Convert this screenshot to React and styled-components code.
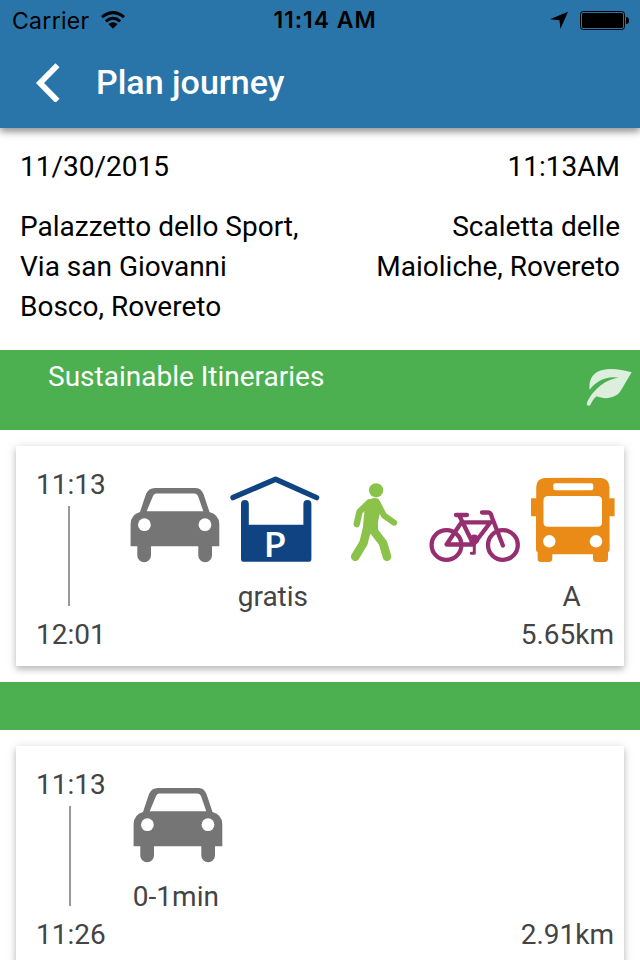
import React from "react";
import styled, { createGlobalStyle } from "styled-components";

const GlobalStyle = createGlobalStyle`
  * { box-sizing: border-box; }
  body { margin: 0; background: #fff; }
`;

const Screen = styled.main`
  width: 640px;
  height: 960px;
  overflow: hidden;
  background: #fff;
  color: #000;
  font: 400 28px/40px Roboto, sans-serif;
`;

const Header = styled.header`
  height: 128px;
  background: #2975a9;
  box-shadow: 0 2px 10px rgba(0, 0, 0, 0.26), 0 4px 6px rgba(0, 0, 0, 0.26);
`;

const StatusBar = styled.div`
  display: grid;
  grid-template-columns: 1fr auto 1fr;
  align-items: center;
  height: 40px;
  padding: 0 10px 0 12px;
  font: 400 23px/40px Inter, sans-serif;
`;

const StatusGroup = styled.div`
  display: flex;
  align-items: center;
  height: 40px;
  justify-content: ${(p) => (p.$end ? "flex-end" : "flex-start")};
  gap: ${(p) => (p.$end ? "12px" : "11px")};
`;

const Carrier = styled.span`
  padding-top: 1px;
  letter-spacing: 0.3px;
`;

const Clock = styled.span`
  font-weight: 600;
  font-size: 23px;
  letter-spacing: 0.95px;
  margin-left: 8px;
`;

const TitleBar = styled.div`
  display: flex;
  align-items: center;
  height: 84px;
  padding: 0 0 0 34px;
  gap: 36px;
`;

const Title = styled.h1`
  margin: 0;
  color: #fff;
  font: 500 34px/40px Roboto, sans-serif;
`;

const Trip = styled.section`
  display: flex;
  flex-direction: column;
  gap: 20px;
  height: 222px;
  padding: 19px 20px 0;
`;

const TripRow = styled.div`
  display: flex;
  justify-content: space-between;
`;

const Place = styled.div`
  width: 290px;
  text-align: ${(p) => (p.$end ? "right" : "left")};
`;

const Banner = styled.div`
  display: flex;
  justify-content: space-between;
  height: ${(p) => p.$height}px;
  padding: 7px 7px 0 48px;
  background: #4caf50;
  color: #fff;
`;

const BannerIcon = styled.div`
  display: flex;
  padding-top: 9px;
`;

const Card = styled.article`
  display: grid;
  grid-template-columns: ${(p) => p.$timeWidth}px 1fr;
  height: 220px;
  margin: 16px;
  padding: 19px 1px 0 20px;
  background: #fff;
  color: #444;
  box-shadow: 0 1px 10px rgba(0, 0, 0, 0.14), 0 4px 6px rgba(0, 0, 0, 0.18);
`;

const Times = styled.div`
  display: flex;
  flex-direction: column;
  align-items: flex-start;
  white-space: nowrap;
`;

const Span = styled.div`
  width: 2px;
  height: 100px;
  margin: 1px 0 9px ${(p) => p.$inset}px;
  background: #999;
`;

const Details = styled.div`
  display: flex;
  flex-direction: column;
`;

const Legs = styled.div`
  display: flex;
  height: 132px;
  padding-top: 9px;
`;

const Leg = styled.div`
  display: flex;
  flex: 0 0 99.6px;
  flex-direction: column;
  align-items: center;
  gap: 13px;
  svg { flex: none; }
`;

const LegLabel = styled.span`
  padding-right: 3px;
`;

const Distance = styled.div`
  padding: 18px 9px 0 0;
  text-align: right;
`;

const WifiIcon = () => (
  <svg width="24" height="18" viewBox="0 0 24 18" fill="none" stroke="#000" strokeWidth="3">
    <path d="M1 6.2Q12-3 23 6.2M4.8 10.3Q12 4.2 19.2 10.3" />
    <path d="M7.4 13Q12 9.3 16.6 13L12 17.8Z" fill="#000" stroke="none" />
  </svg>
);

const LocationIcon = () => (
  <svg width="18" height="18" viewBox="0 0 18 18">
    <path d="M18 .8L10.4 18L9.5 9.2L0 8.2Z" />
  </svg>
);

const BatteryIcon = () => (
  <svg width="50" height="20" viewBox="0 0 50 20">
    <rect x=".5" y="1.5" width="44" height="18" rx="2.8" fill="none" stroke="#000" strokeWidth="1" />
    <rect x="2" y="3" width="41" height="15" rx="1.5" />
    <path d="M46 7Q49 7 49 10.5T46 14Z" />
  </svg>
);

const BackIcon = () => (
  <svg width="26" height="40" viewBox="0 0 26 40" fill="none" stroke="#fff" strokeWidth="5.8">
    <path d="M23.5 3.2L6 21L23.5 38.8" />
  </svg>
);

const LeafIcon = () => (
  <svg width="48" height="42" viewBox="78 78 144 126" fill="#dbefdc">
    <path d="M218 97C205 119 195 137 184 154C172 174 138 180 113 169C104 175 100 184 94 195C89 200 81 195 84 188C95 161 130 119 179 113C143 106 110 124 92 149C89 126 96 105 116 95C142 81 183 87 218 97Z" />
  </svg>
);

const CarIcon = () => (
  <svg width="99.6" height="90" viewBox="0 0 99.6 90">
    <path
      fill="#757575"
      fillRule="evenodd"
      d="M30 14H71Q76 14 78.5 20L84.5 38Q94.3 41 94.3 50V72.3H87V81.5A6.8 6.8 0 0 1 73.3 81.5V72.3H26V81.5A6.8 6.8 0 0 1 12.3 81.5V72.3H5.6V50Q5.6 41 15 38L21 20Q23.5 14 30 14ZM31 19.5Q29 19.5 28 22L21.7 37.2H78.3L73 22Q72 19.5 69.5 19.5Z"
    />
    <circle cx="19.4" cy="50.7" r="6.4" fill="#fff" />
    <circle cx="80" cy="50.7" r="6.4" fill="#fff" />
  </svg>
);

const ParkingIcon = () => (
  <svg width="99.6" height="90" viewBox="0 0 99.6 90" overflow="visible">
    <path d="M8 23.6L50.6 5.2L91.6 23.6" fill="none" stroke="#104382" strokeWidth="5.4" strokeLinecap="round" strokeLinejoin="round" />
    <path d="M16 30A3.9 3.9 0 0 1 23.8 30V50.7H78.4V30A3.9 3.9 0 0 1 86.4 30V85Q86.4 87.8 83.6 87.8H18.8Q16 87.8 16 85Z" fill="#104382" />
    <text x="38.4" y="83.3" fill="#fff" fontFamily="Open Sans, sans-serif" fontWeight="600" fontSize="35" textLength="23" lengthAdjust="spacingAndGlyphs">P</text>
  </svg>
);

const WalkIcon = () => (
  <svg width="99.6" height="90" viewBox="0 0 99.6 90" fill="none" stroke="#8bc34a" strokeLinecap="round" strokeLinejoin="round">
    <circle cx="52.1" cy="16.3" r="7.1" fill="#8bc34a" stroke="none" />
    <path d="M45 28.5L35.5 37.8L32.7 50.2" strokeWidth="6.4" />
    <path d="M54 30L60 41.5L70.2 48.7" strokeWidth="6" />
    <path d="M42.5 57L39.5 69L31.2 82.8" strokeWidth="8.6" />
    <path d="M49 56L59 69L63 82.8" strokeWidth="8.6" />
    <path d="M50.8 24C43 24 40.5 33 40 42L38.3 59L46.5 60L54 57L54 48L57 34C57 27 55 24 50.8 24Z" fill="#8bc34a" stroke="none" />
  </svg>
);

const BikeIcon = () => (
  <svg width="99.6" height="90" viewBox="0 0 99.6 90" fill="none" stroke="#962f70" strokeWidth="4.3" strokeLinecap="round" strokeLinejoin="round">
    <circle cx="22.5" cy="71" r="14.9" />
    <circle cx="78.9" cy="71" r="14.9" />
    <path d="M49.5 70.5H22.5L37.5 48.3H66.5L49.5 70.5L35.5 42M32 41H43M58 38.5H64.5Q67 38.5 68 43.5L78.9 71.5" />
    <circle cx="50.3" cy="65.5" r="5.1" fill="#962f70" stroke="none" />
    <path d="M50.3 67V79.3H47.3" strokeWidth="3" />
  </svg>
);

const BusIcon = () => (
  <svg width="99.6" height="90" viewBox="0 0 99.6 90">
    <path
      fill="#eb8b17"
      fillRule="evenodd"
      d="M21 4Q50 3.4 78.6 4Q86 5 86.4 13V24.3H91.6V42.3H86.6V75Q86.6 78 85 78V84.5Q85 88 81.5 88H73.5Q70 88 70 84.5V80.3H29.3V84.5Q29.3 88 25.8 88H18Q14.6 88 14.6 84.5V78Q13 78 13 75V42.3H8V24.3H13.2V13Q13.6 5 21 4ZM32.3 9.3Q30.3 9.3 30.3 11.3V14.3Q30.3 16.3 32.3 16.3H68.3Q70.3 16.3 70.3 14.3V11.3Q70.3 9.3 68.3 9.3ZM25 21.9Q20.5 21.9 20.5 26.4V48.3Q20.5 52.8 25 52.8H74.5Q79 52.8 79 48.3V26.4Q79 21.9 74.5 21.9Z"
    />
    <circle cx="26.3" cy="67.3" r="6.2" fill="#fff" />
    <circle cx="73" cy="67.3" r="6.2" fill="#fff" />
  </svg>
);

const icons = { car: CarIcon, parking: ParkingIcon, walk: WalkIcon, bike: BikeIcon, bus: BusIcon };

const itineraries = [
  {
    start: "11:13", end: "12:01", distance: "5.65km", timeWidth: 89, inset: 32,
    legs: [
      { mode: "car" },
      { mode: "parking", label: "gratis" },
      { mode: "walk" },
      { mode: "bike" },
      { mode: "bus", label: "A" },
    ],
  },
  {
    start: "11:13", end: "11:26", distance: "2.91km", timeWidth: 91.6, inset: 33,
    legs: [{ mode: "car", label: "0-1min" }],
  },
];

function Itinerary({ start, end, distance, legs, timeWidth, inset }) {
  return (
    <Card $timeWidth={timeWidth}>
      <Times>
        <span>{start}</span>
        <Span $inset={inset} />
        <span>{end}</span>
      </Times>
      <Details>
        <Legs>
          {legs.map(({ mode, label }) => {
            const Icon = icons[mode];
            return (
              <Leg key={mode}>
                <Icon />
                {label && <LegLabel>{label}</LegLabel>}
              </Leg>
            );
          })}
        </Legs>
        <Distance>{distance}</Distance>
      </Details>
    </Card>
  );
}

export default function App() {
  return (
    <Screen>
      <GlobalStyle />
      <Header>
        <StatusBar>
          <StatusGroup>
            <Carrier>Carrier</Carrier>
            <WifiIcon />
          </StatusGroup>
          <Clock>11:14 AM</Clock>
          <StatusGroup $end>
            <LocationIcon />
            <BatteryIcon />
          </StatusGroup>
        </StatusBar>
        <TitleBar>
          <BackIcon />
          <Title>Plan journey</Title>
        </TitleBar>
      </Header>
      <Trip>
        <TripRow>
          <span>11/30/2015</span>
          <span>11:13AM</span>
        </TripRow>
        <TripRow>
          <Place>Palazzetto dello Sport, Via san Giovanni Bosco, Rovereto</Place>
          <Place $end>Scaletta delle Maioliche, Rovereto</Place>
        </TripRow>
      </Trip>
      <Banner $height={80}>
        <span>Sustainable Itineraries</span>
        <BannerIcon><LeafIcon /></BannerIcon>
      </Banner>
      <Itinerary {...itineraries[0]} />
      <Banner $height={48} />
      <Itinerary {...itineraries[1]} />
    </Screen>
  );
}
